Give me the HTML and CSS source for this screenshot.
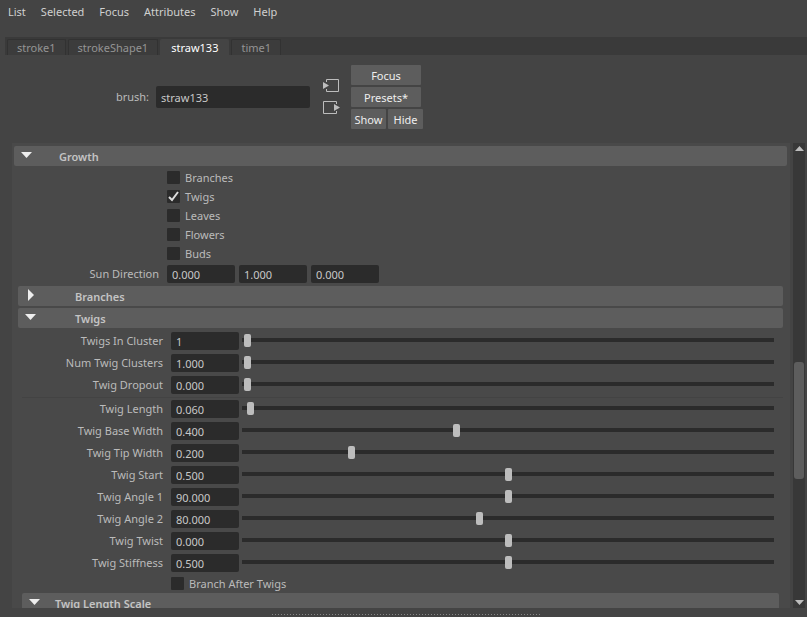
FILE: index.html
```html
<!DOCTYPE html>
<html lang="en">
<head>
<meta charset="utf-8">
<title>Attribute Editor</title>
<link rel="stylesheet" href="styles.css">
</head>
<body>
<div class="editor">
  <nav class="menu">
    <button>List</button><button>Selected</button><button>Focus</button><button>Attributes</button><button>Show</button><button>Help</button>
  </nav>
  <div class="tabs" role="tablist">
    <button role="tab">stroke1</button>
    <button role="tab">strokeShape1</button>
    <button role="tab" class="active" aria-selected="true">straw133</button>
    <button role="tab">time1</button>
  </div>
  <header class="node">
    <label class="node-label" for="brush">brush:</label>
    <input class="field node-name" id="brush" value="straw133">
    <div class="io">
      <button aria-label="Go to input"><svg width="17" height="14" viewBox="0 0 17 14"><path d="M3.5 3V.5h12v12h-12V10" fill="none" stroke="#bdbdbd"/><path d="M0 3v7l6-3.500z" fill="#bdbdbd"/></svg></button>
      <button aria-label="Go to output"><svg width="17" height="14" viewBox="0 0 17 14"><path d="M13.500 3V.5H.5v12h13V10" fill="none" stroke="#bdbdbd"/><path d="M11 3v7l6-3.500z" fill="#bdbdbd"/></svg></button>
    </div>
    <div class="actions">
      <button class="wide">Focus</button>
      <button class="wide">Presets*</button>
      <div class="pair"><button>Show</button><button>Hide</button></div>
    </div>
  </header>
  <div class="scroll">
    <main class="panel">
      <section class="group">
        <button class="bar growth" aria-expanded="true"><svg width="11" height="6"><path d="M0 0h11L5.500 6z"/></svg><b>Growth</b></button>
        <div class="checks">
          <label class="check"><input type="checkbox">Branches</label>
          <label class="check"><input type="checkbox" checked>Twigs</label>
          <label class="check"><input type="checkbox">Leaves</label>
          <label class="check"><input type="checkbox">Flowers</label>
          <label class="check"><input type="checkbox">Buds</label>
        </div>
        <div class="row sun">
          <label for="sx">Sun Direction</label>
          <div class="triple"><input class="field" id="sx" value="0.000"><input class="field" aria-label="Sun Direction Y" value="1.000"><input class="field" aria-label="Sun Direction Z" value="0.000"></div>
        </div>
        <section class="group">
          <button class="bar" aria-expanded="false"><svg width="11" height="12"><path d="M3 0v12l6-6z"/></svg><b>Branches</b></button>
        </section>
        <section class="group">
          <button class="bar" aria-expanded="true"><svg width="11" height="6"><path d="M0 0h11L5.500 6z"/></svg><b>Twigs</b></button>
          <div class="rows">
            <div class="row"><label for="a1">Twigs In Cluster</label><input class="field" id="a1" value="1"><input type="range" aria-label="Twigs In Cluster" min="0" max="1" step="any" value="0"></div>
            <div class="row"><label for="a2">Num Twig Clusters</label><input class="field" id="a2" value="1.000"><input type="range" aria-label="Num Twig Clusters" min="0" max="1" step="any" value="0"></div>
            <div class="row"><label for="a3">Twig Dropout</label><input class="field" id="a3" value="0.000"><input type="range" aria-label="Twig Dropout" min="0" max="1" step="any" value="0"></div>
          </div>
          <hr>
          <div class="rows">
            <div class="row"><label for="b1">Twig Length</label><input class="field" id="b1" value="0.060"><input type="range" aria-label="Twig Length" min="0" max="1" step="any" value="0.006"></div>
            <div class="row"><label for="b2">Twig Base Width</label><input class="field" id="b2" value="0.400"><input type="range" aria-label="Twig Base Width" min="0" max="1" step="any" value="0.4"></div>
            <div class="row"><label for="b3">Twig Tip Width</label><input class="field" id="b3" value="0.200"><input type="range" aria-label="Twig Tip Width" min="0" max="1" step="any" value="0.2"></div>
            <div class="row"><label for="b4">Twig Start</label><input class="field" id="b4" value="0.500"><input type="range" aria-label="Twig Start" min="0" max="1" step="any" value="0.5"></div>
            <div class="row"><label for="b5">Twig Angle 1</label><input class="field" id="b5" value="90.000"><input type="range" aria-label="Twig Angle 1" min="0" max="180" step="any" value="90"></div>
            <div class="row"><label for="b6">Twig Angle 2</label><input class="field" id="b6" value="80.000"><input type="range" aria-label="Twig Angle 2" min="0" max="180" step="any" value="80"></div>
            <div class="row"><label for="b7">Twig Twist</label><input class="field" id="b7" value="0.000"><input type="range" aria-label="Twig Twist" min="-1" max="1" step="any" value="0"></div>
            <div class="row"><label for="b8">Twig Stiffness</label><input class="field" id="b8" value="0.500"><input type="range" aria-label="Twig Stiffness" min="0" max="1" step="any" value="0.5"></div>
          </div>
          <div class="checks"><label class="check"><input type="checkbox">Branch After Twigs</label></div>
          <section class="group scale">
            <button class="bar inner" aria-expanded="true"><svg width="11" height="6"><path d="M0 0h11L5.500 6z"/></svg><b>Twig Length Scale</b></button>
          </section>
        </section>
      </section>
    </main>
    <div class="scrollbar">
      <svg width="9" height="5"><path d="M0 5h9L4.500 0z"/></svg>
      <div class="track"><div class="thumb"></div></div>
      <svg width="9" height="5"><path d="M0 0h9L4.500 5z"/></svg>
    </div>
  </div>
  <footer><div class="grip"></div></footer>
</div>
</body>
</html>
```
FILE: styles.css
```css
* { box-sizing: border-box; }
body {
  margin: 0;
  background: #444;
  color: #bbb;
  font: 11px/16px "Noto Sans", "Open Sans", sans-serif;
}
button, input { font: inherit; color: inherit; margin: 0; }
button { border: 0; padding: 0; background: none; }
svg { display: block; }

.editor { height: 100vh; display: flex; flex-direction: column; }
.menu {
  display: flex;
  gap: 15px;
  height: 37px;
  padding: 4px 8px 0;
  align-items: flex-start;
  color: #d0d0d0;
  flex: none;
}
.tabs {
  display: flex;
  flex: none;
  gap: 2px;
  height: 18px;
  margin-left: 5px;
  padding: 2px 2px 0;
  background: #3a3a3a;
}
.tabs button {
  padding: 0 9px;
  background: #3c3c3c;
  border: 1px solid #323232;
  border-bottom: 0;
  border-radius: 2px 2px 0 0;
  color: #949494;
}
.tabs .active { background: #444; border-color: #444; color: #fff; padding: 0 10px; }

.node { display: flex; flex: none; align-items: center; height: 88px; padding: 0 0 4px; }
.node-label { width: 149px; margin-right: 7px; text-align: right; }
.field {
  width: 68px;
  height: 18px;
  padding: 1px 5px 0;
  border: 0;
  border-radius: 2px;
  background: #2b2b2b;
  color: #c8c8c8;
}
.node-name { width: 154px; height: 22px; }
.io { display: grid; gap: 8px; margin: 0 11px 0 13px; }
.actions { display: grid; gap: 2px; }
.actions button {
  height: 20px;
  background: #5d5d5d;
  border-radius: 1px;
  color: #eee;
}
.actions .wide { width: 70px; padding-top: 1px; }
.pair { display: flex; gap: 2px; }
.pair button { width: 35px; padding-top: 1px; }

.scroll { flex: 1; min-height: 0; display: flex; overflow: hidden; }
.panel {
  flex: 1;
  min-width: 0;
  height: 100%;
  overflow: hidden;
  margin: 0 3px 0 12px;
  padding: 3px 3px 0 2px;
  background: #494949;
}
.group .group { margin: 2px 4px 0; }
.group .scale { margin-top: 0; }
.bar {
  display: flex;
  width: 100%;
  height: 20px;
  align-items: flex-start;
  padding: 0 7px;
  background: #5d5d5d;
  border-radius: 2px;
  color: #c4c4c4;
}
.bar svg { margin-top: 6px; fill: #eee; }
.bar svg[height="12"] { margin-top: 3px; }
.bar b { margin: 3px 0 0 39px; font-weight: 600; }
.bar.growth b { margin-left: 27px; }
.bar.inner b { margin-left: 15px; }
.checks { padding: 2px 0 0 153px; }
.check { display: flex; width: max-content; height: 19px; align-items: center; gap: 5px; }
.check input {
  appearance: none;
  width: 13px;
  height: 13px;
  border-radius: 1px;
  background: #2b2b2b;
}
.check input:checked {
  background: #2b2b2b url("data:image/svg+xml,%3Csvg xmlns='http://www.w3.org/2000/svg' width='13' height='13'%3E%3Cpath d='M2 7l3 3 6-8' fill='none' stroke='%23ddd' stroke-width='2'/%3E%3C/svg%3E");
}
.row {
  display: grid;
  grid-template-columns: 145px 68px 1fr;
  column-gap: 8px;
  align-items: center;
  height: 18px;
}
.row > label { text-align: right; white-space: nowrap; }
.sun { grid-template-columns: 145px 1fr; margin: 2px 0 3px; }
.triple { display: flex; gap: 4px; }
.rows { display: grid; gap: 4px; margin-top: 4px; padding-right: 9px; }
hr { height: 2px; margin: 3px 0 -3px 4px; border: 0; border-top: 1px solid #434343; }
hr + .rows { margin-top: 4px; }
input[type="range"] {
  appearance: none;
  min-width: 0;
  width: auto;
  height: 16px;
  align-self: start;
  margin-left: -5px;
  padding: 0 1px 0 2px;
  border-radius: 2px;
  background: linear-gradient(#2b2b2b, #2b2b2b) 0 center / 100% 4px no-repeat;
}
input[type="range"]::-webkit-slider-thumb {
  appearance: none;
  width: 7px;
  height: 13px;
  border-radius: 2px;
  background: #bdbdbd;
}
.scrollbar {
  display: flex;
  flex-direction: column;
  align-items: center;
  width: 12px;
  margin-right: 2px;
  padding: 3px 0;
  background: #383838;
}
.scrollbar svg { fill: #bdbdbd; }
.track { flex: 1; width: 10px; }
.track::before { content: ""; display: block; height: 47%; }
.thumb { height: 26%; border-radius: 3px; background: #5d5d5d; }
footer { flex: none; height: 9px; padding: 5px 0 0 5px; }
.grip {
  width: 269px;
  height: 3px;
  margin: 0 auto;
  background:
    repeating-linear-gradient(90deg, #858585 0 1px, transparent 1px 3px) 0 1px / 100% 1px no-repeat;
}
```
